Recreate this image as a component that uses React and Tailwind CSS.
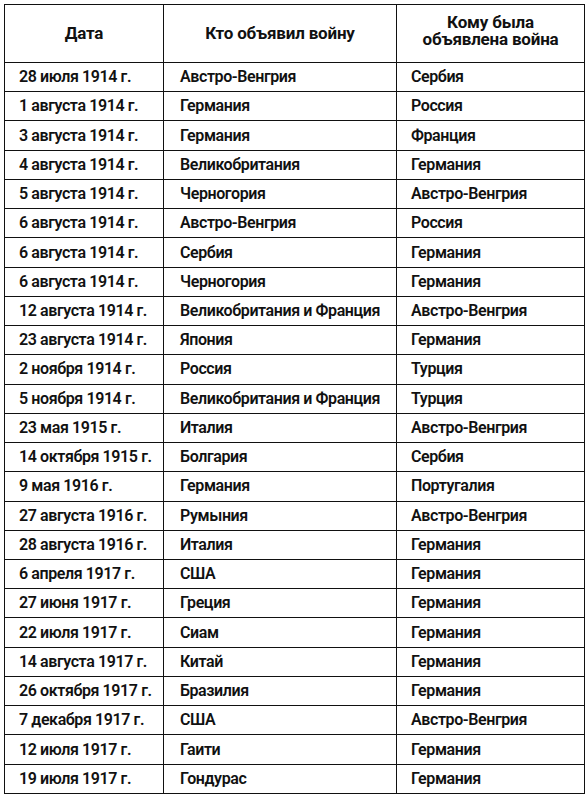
const rows = [
  ["28 июля 1914 г.", "Австро-Венгрия", "Сербия"],
  ["1 августа 1914 г.", "Германия", "Россия"],
  ["3 августа 1914 г.", "Германия", "Франция"],
  ["4 августа 1914 г.", "Великобритания", "Германия"],
  ["5 августа 1914 г.", "Черногория", "Австро-Венгрия"],
  ["6 августа 1914 г.", "Австро-Венгрия", "Россия"],
  ["6 августа 1914 г.", "Сербия", "Германия"],
  ["6 августа 1914 г.", "Черногория", "Германия"],
  ["12 августа 1914 г.", "Великобритания и Франция", "Австро-Венгрия"],
  ["23 августа 1914 г.", "Япония", "Германия"],
  ["2 ноября 1914 г.", "Россия", "Турция"],
  ["5 ноября 1914 г.", "Великобритания и Франция", "Турция"],
  ["23 мая 1915 г.", "Италия", "Австро-Венгрия"],
  ["14 октября 1915 г.", "Болгария", "Сербия"],
  ["9 мая 1916 г.", "Германия", "Португалия"],
  ["27 августа 1916 г.", "Румыния", "Австро-Венгрия"],
  ["28 августа 1916 г.", "Италия", "Германия"],
  ["6 апреля 1917 г.", "США", "Германия"],
  ["27 июня 1917 г.", "Греция", "Германия"],
  ["22 июля 1917 г.", "Сиам", "Германия"],
  ["14 августа 1917 г.", "Китай", "Германия"],
  ["26 октября 1917 г.", "Бразилия", "Германия"],
  ["7 декабря 1917 г.", "США", "Австро-Венгрия"],
  ["12 июля 1917 г.", "Гаити", "Германия"],
  ["19 июля 1917 г.", "Гондурас", "Германия"],
];

export default function App() {
  return (
    <div
      className="w-[588px] h-[795px] bg-white pt-[4px] pl-[4px] text-[#111]"
      style={{ fontFamily: 'Roboto, "Noto Sans", sans-serif' }}
    >
      <table className="border-collapse border border-[#111] table-fixed w-[580px]">
        <colgroup>
          <col className="w-[159px]" />
          <col className="w-[233px]" />
          <col className="w-[188px]" />
        </colgroup>
        <thead>
          <tr className="h-[58px]">
            <th className="border border-[#111] text-[17px] font-bold tracking-[-0.2px] text-center align-middle">Дата</th>
            <th className="border border-[#111] text-[17px] font-bold tracking-[-0.2px] text-center align-middle">Кто объявил войну</th>
            <th className="border border-[#111] text-[17px] font-bold tracking-[-0.2px] text-center align-middle leading-[17px] pb-[5px]">
              Кому была
              <br />
              объявлена война
            </th>
          </tr>
        </thead>
        <tbody>
          {rows.map((r, i) => (
            <tr key={i} className="h-[29.24px]">
              <td className="border border-[#111] pl-[14px] text-[16px] font-semibold tracking-[-0.4px] leading-none whitespace-nowrap">{r[0]}</td>
              <td className="border border-[#111] pl-[16px] text-[16px] font-semibold tracking-[-0.4px] leading-none whitespace-nowrap">{r[1]}</td>
              <td className="border border-[#111] pl-[14px] text-[16px] font-semibold tracking-[-0.4px] leading-none whitespace-nowrap">{r[2]}</td>
            </tr>
          ))}
        </tbody>
      </table>
    </div>
  );
}
